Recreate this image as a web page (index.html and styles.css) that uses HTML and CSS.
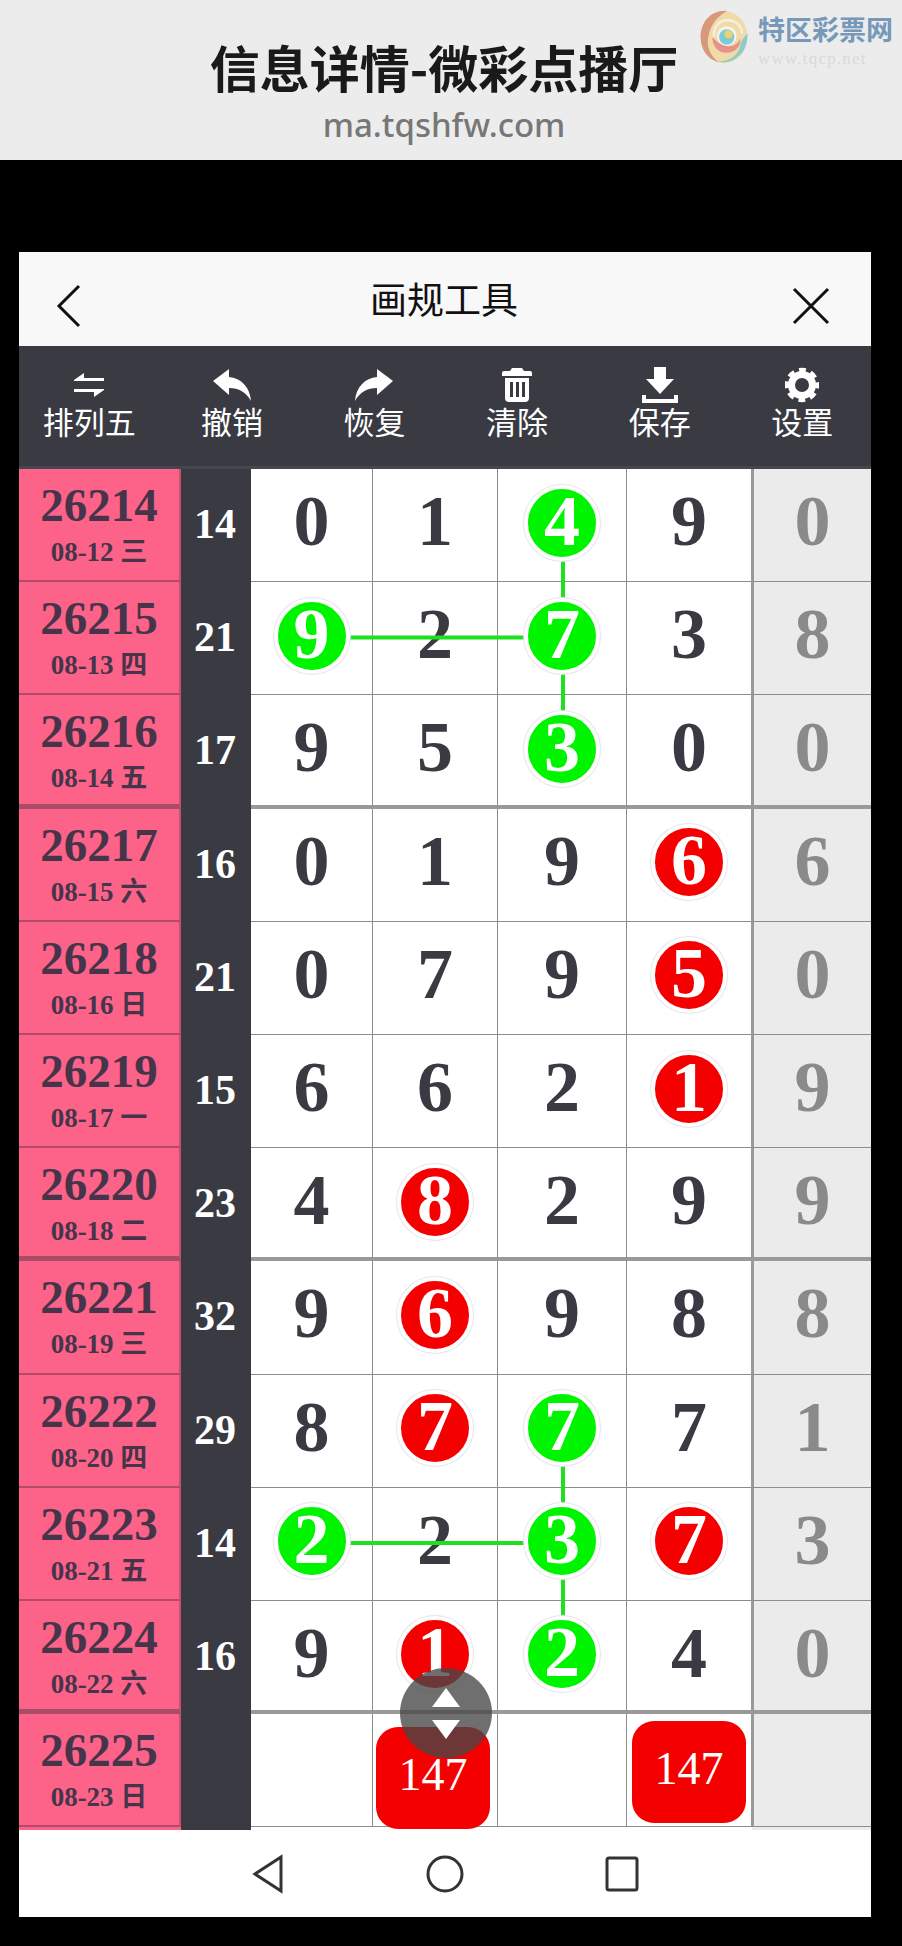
FILE: index.html
```html
<!DOCTYPE html>
<html lang="zh-CN">
<head>
    <meta charset="UTF-8">
    <meta name="viewport" content="width=device-width, initial-scale=1.0">
    <title>画规工具</title>
    <link rel="stylesheet" href="styles.css">
</head>
<body>
    <div class="banner">
        <div class="banner-title">信息详情-微彩点播厅</div>
        <div class="banner-url">ma.tqshfw.com</div>
        <div class="logo">
            <svg class="logo-mark" width="52" height="54" viewBox="0 0 54 60">
                <ellipse cx="27" cy="30" rx="26" ry="29" fill="#f1d9a0"/>
                <path d="M30 1C12 0 1 14 1 30c0 14 8 25 20 28C11 50 7 40 10 28 12 16 20 7 30 1z" fill="#d88f70"/>
                <path d="M53 26c1 16-9 31-26 32-3 0-5 0-7-1 13 1 23-7 25-17 1-6 4-10 8-14z" fill="#86c8c8"/>
                <path d="M14 30c0 12 9 20 20 17 8-2 12-8 11-15-3 6-8 9-15 8-7-1-11-5-16-10z" fill="#e58a80"/>
                <path d="M16 30C14 18 24 9 36 12c7 2 11 8 11 14" fill="none" stroke="#f6eedd" stroke-width="3"/>
                <circle cx="30" cy="29" r="11" fill="#f6f4ec"/>
                <circle cx="30" cy="30" r="8.5" fill="#72c8d8"/>
                <circle cx="32" cy="27" r="4.5" fill="#e7d25c"/>
            </svg>
            <div class="logo-text">
                <div class="logo-name">特区彩票网</div>
                <div class="logo-site">www.tqcp.net</div>
            </div>
        </div>
    </div>

    <div class="app">
        <div class="app-head">
            <svg class="head-icon" width="26" height="44" viewBox="0 0 26 44"><path d="M23 2 3 22l20 20"/></svg>
            <div class="app-title">画规工具</div>
            <svg class="head-icon" width="38" height="38" viewBox="0 0 38 38"><path d="M2 2l34 34M36 2 2 36"/></svg>
        </div>

        <div class="toolbar">
            <div class="tool">
                <svg width="32" height="26" viewBox="0 0 32 26"><path d="M1 8 11 1v5h20v3H1zM31 18 21 25v-5H1v-3h30z"/></svg>
                <span>排列五</span>
            </div>
            <div class="tool">
                <svg width="38" height="32" viewBox="0 0 38 32"><path d="M0 12 16 0v8c12 1 21 10 22 24-5-9-12-13-22-13v7z"/></svg>
                <span>撤销</span>
            </div>
            <div class="tool">
                <svg width="38" height="32" viewBox="0 0 38 32"><path d="M38 12 22 0v8C10 9 1 18 0 32c5-9 12-13 22-13v7z"/></svg>
                <span>恢复</span>
            </div>
            <div class="tool">
                <svg width="30" height="34" viewBox="0 0 30 34"><path fill-rule="evenodd" d="M10 0h10l2 3h6a2 2 0 0 1 2 2v3H0V5a2 2 0 0 1 2-2h6zM3 10h24v20a4 4 0 0 1-4 4H7a4 4 0 0 1-4-4zm5 4v15h3V14zm6 0v15h3V14zm6 0v15h3V14z"/></svg>
                <span>清除</span>
            </div>
            <div class="tool">
                <svg width="36" height="36" viewBox="0 0 36 36"><path d="M12 0h12v12h8L18 27 4 12h8zM0 28h4v4h28v-4h4v8H0z"/></svg>
                <span>保存</span>
            </div>
            <div class="tool">
                <svg class="gear" width="34" height="34" viewBox="0 0 34 34">
                    <circle cx="17" cy="17" r="10.5" stroke-width="7"/>
                    <circle cx="17" cy="17" r="14.5" stroke-width="5.5" stroke-dasharray="6.5 4.89" stroke-dashoffset="3.25"/>
                </svg>
                <span>设置</span>
            </div>
        </div>

        <div class="table">
            <svg class="links" width="852" height="1364" viewBox="0 0 852 1364">
                <path d="M291 171.5H544M544 58V284M291 1077H544M544 964V1190"/>
            </svg>

            <div class="row">
                <div class="qi"><b>26214</b><small>08-12 三</small></div><div class="he">14</div>
                <div class="n">0</div><div class="n">1</div><div class="n"><i class="ball g">4</i></div><div class="n">9</div><div class="n last">0</div>
            </div>
            <div class="row">
                <div class="qi"><b>26215</b><small>08-13 四</small></div><div class="he">21</div>
                <div class="n"><i class="ball g">9</i></div><div class="n">2</div><div class="n"><i class="ball g">7</i></div><div class="n">3</div><div class="n last">8</div>
            </div>
            <div class="row thick">
                <div class="qi"><b>26216</b><small>08-14 五</small></div><div class="he">17</div>
                <div class="n">9</div><div class="n">5</div><div class="n"><i class="ball g">3</i></div><div class="n">0</div><div class="n last">0</div>
            </div>
            <div class="row">
                <div class="qi"><b>26217</b><small>08-15 六</small></div><div class="he">16</div>
                <div class="n">0</div><div class="n">1</div><div class="n">9</div><div class="n"><i class="ball r">6</i></div><div class="n last">6</div>
            </div>
            <div class="row">
                <div class="qi"><b>26218</b><small>08-16 日</small></div><div class="he">21</div>
                <div class="n">0</div><div class="n">7</div><div class="n">9</div><div class="n"><i class="ball r">5</i></div><div class="n last">0</div>
            </div>
            <div class="row">
                <div class="qi"><b>26219</b><small>08-17 一</small></div><div class="he">15</div>
                <div class="n">6</div><div class="n">6</div><div class="n">2</div><div class="n"><i class="ball r">1</i></div><div class="n last">9</div>
            </div>
            <div class="row thick">
                <div class="qi"><b>26220</b><small>08-18 二</small></div><div class="he">23</div>
                <div class="n">4</div><div class="n"><i class="ball r">8</i></div><div class="n">2</div><div class="n">9</div><div class="n last">9</div>
            </div>
            <div class="row">
                <div class="qi"><b>26221</b><small>08-19 三</small></div><div class="he">32</div>
                <div class="n">9</div><div class="n"><i class="ball r">6</i></div><div class="n">9</div><div class="n">8</div><div class="n last">8</div>
            </div>
            <div class="row">
                <div class="qi"><b>26222</b><small>08-20 四</small></div><div class="he">29</div>
                <div class="n">8</div><div class="n"><i class="ball r">7</i></div><div class="n"><i class="ball g">7</i></div><div class="n">7</div><div class="n last">1</div>
            </div>
            <div class="row">
                <div class="qi"><b>26223</b><small>08-21 五</small></div><div class="he">14</div>
                <div class="n"><i class="ball g">2</i></div><div class="n">2</div><div class="n"><i class="ball g">3</i></div><div class="n"><i class="ball r">7</i></div><div class="n last">3</div>
            </div>
            <div class="row thick">
                <div class="qi"><b>26224</b><small>08-22 六</small></div><div class="he">16</div>
                <div class="n">9</div><div class="n"><i class="ball r">1</i></div><div class="n"><i class="ball g">2</i></div><div class="n">4</div><div class="n last">0</div>
            </div>
            <div class="row">
                <div class="qi"><b>26225</b><small>08-23 日</small></div><div class="he"></div>
                <div class="n"></div><div class="n"><span class="pick pick-low">147</span></div><div class="n"></div><div class="n"><span class="pick">147</span></div><div class="n last"></div>
            </div>

            <div class="scroll-btn"><i class="tri-up"></i><i class="tri-down"></i></div>
        </div>

        <div class="nav">
            <svg width="34" height="40" viewBox="0 0 34 40"><path d="M30 3 4 20l26 17z"/></svg>
            <svg width="38" height="38" viewBox="0 0 38 38"><circle cx="19" cy="19" r="17"/></svg>
            <svg width="34" height="36" viewBox="0 0 34 36"><rect x="2" y="2" width="30" height="32" rx="2"/></svg>
        </div>
    </div>
</body>
</html>
```

FILE: styles.css
```css
html, body {
    margin: 0;
    padding: 0;
}

body {
    width: 902px;
    height: 1946px;
    overflow: hidden;
    background-color: #000;
    font-family: "Noto Sans CJK SC", "Noto Sans", sans-serif;
}

.banner {
    position: relative;
    height: 160px;
    padding-right: 14px;
    box-sizing: border-box;
    background-color: #ececec;
    display: flex;
    flex-direction: column;
    align-items: center;
}

.banner-title {
    margin-top: 30px;
    font-size: 50px;
    line-height: 72px;
    font-weight: 700;
    color: #1a1a1a;
}

.banner-url {
    font-family: "Noto Sans", sans-serif;
    font-size: 33px;
    line-height: 46px;
    font-weight: 500;
    color: #777;
}

.logo {
    position: absolute;
    top: 10px;
    right: 9px;
    display: flex;
    align-items: flex-start;
    gap: 8px;
    opacity: 0.9;
}

.logo-text {
    margin-top: 6px;
}

.logo-name {
    font-size: 27px;
    line-height: 26px;
    font-weight: 700;
    color: #6a8fb4;
}

.logo-site {
    margin-top: 7px;
    font-family: "Liberation Serif", serif;
    font-size: 17px;
    line-height: 20px;
    letter-spacing: 1.2px;
    color: #d8d8d8;
}

.app {
    width: 852px;
    margin: 92px 0 0 19px;
}

.app-head {
    height: 94px;
    padding: 14px 41px 0 37px;
    box-sizing: border-box;
    display: flex;
    align-items: center;
    justify-content: space-between;
    background-color: #f8f8f8;
}

.head-icon {
    fill: none;
    stroke: #111;
    stroke-width: 3;
}

.app-title {
    font-size: 37px;
    color: #111;
    margin: -16px 0 0 14px;
}

.toolbar {
    height: 120px;
    display: flex;
    overflow: hidden;
    background-color: #3a3a42;
}

.tool {
    flex: 0 0 142.6px;
    display: flex;
    flex-direction: column;
    align-items: center;
    color: #fff;
    font-size: 31px;
}

.tool:first-child {
    margin-left: -1px;
}

.tool svg {
    height: 36px;
    margin-top: 21px;
    fill: #fff;
}

.tool .gear {
    fill: none;
    stroke: #fff;
}

.tool span {
    line-height: 38px;
    margin-top: -1px;
}

.table {
    position: relative;
    height: 1364px;
    border-top: 3px solid #46464e;
    box-sizing: border-box;
    display: flex;
    flex-direction: column;
    background: linear-gradient(90deg, #fd6388 162px, #3a3a42 162px 232px, #fff 232px 733px, #ebebeb 733px);
}

.links {
    position: absolute;
    top: -3px;
    left: 0;
    z-index: 1;
    fill: none;
    stroke: #1ee01e;
    stroke-width: 4;
}

.row {
    height: 113.2px;
    flex: none;
    box-sizing: border-box;
    display: grid;
    grid-template-columns: 162px 70px 122px 125px 129px 125px 119px;
    grid-template-rows: minmax(0, 1fr);
    font-family: "Liberation Serif", "Noto Sans CJK SC", serif;
    font-weight: 700;
}

.qi {
    background-color: #fd6388;
    border-bottom: 2px solid #b24a68;
    border-right: 2px solid #c9506f;
    box-sizing: border-box;
    color: #46354a;
    text-align: center;
}

.qi b {
    display: block;
    font-size: 47px;
    line-height: 50px;
    margin-top: 11px;
}

.qi small {
    display: block;
    margin-top: 6px;
    font-size: 27px;
    line-height: 32px;
    font-weight: 700;
}

.he {
    padding: 0 2px 3px 0;
    box-sizing: border-box;
    background-color: #3a3a42;
    color: #fff;
    font-size: 42px;
    display: flex;
    align-items: center;
    justify-content: center;
}

.n {
    display: flex;
    align-items: center;
    justify-content: center;
    padding-bottom: 8px;
    box-sizing: border-box;
    background-color: #fff;
    border-bottom: 1px solid #8c8c8c;
    border-right: 1px solid #8c8c8c;
    color: #3a3a42;
    font-size: 72px;
    line-height: 1;
}

.last {
    background-color: #ebebeb;
    border-right: none;
    border-left: 3px solid #999;
    margin-left: -1px;
    color: #8a8a8a;
}

.thick .qi {
    border-bottom: 5px solid #a84c68;
}

.thick .n {
    padding-bottom: 5px;
    border-bottom: 4px solid #999;
}

.ball {
    position: relative;
    z-index: 2;
    box-sizing: border-box;
    width: 76px;
    height: 76px;
    margin-top: 3px;
    padding-bottom: 4px;
    border: 4px solid #fff;
    border-radius: 50%;
    box-shadow: 0 0 1px 1px #e4e4e8;
    display: flex;
    align-items: center;
    justify-content: center;
    font-style: normal;
    color: #fff;
}

.ball.g {
    background-color: #00f400;
}

.ball.r {
    background-color: #f40000;
}

.pick {
    position: relative;
    box-sizing: border-box;
    width: 114px;
    height: 102px;
    margin-top: 12px;
    padding-bottom: 6px;
    border-radius: 22px;
    background-color: #f40000;
    color: #fff;
    font-size: 46px;
    font-weight: 400;
    display: flex;
    align-items: center;
    justify-content: center;
}

.pick-low {
    margin-top: 24px;
    margin-left: -4px;
}

.scroll-btn {
    position: absolute;
    left: 381px;
    top: 1199px;
    z-index: 3;
    width: 92px;
    height: 90px;
    border-radius: 50%;
    background-color: rgba(70, 70, 70, 0.78);
    display: flex;
    flex-direction: column;
    align-items: center;
    justify-content: center;
    gap: 13px;
}

.tri-up, .tri-down {
    width: 0;
    height: 0;
    border-left: 14px solid transparent;
    border-right: 14px solid transparent;
}

.tri-up {
    border-bottom: 19px solid #fff;
}

.tri-down {
    border-top: 19px solid #fff;
}

.nav {
    height: 87px;
    display: flex;
    align-items: center;
    justify-content: center;
    gap: 141px;
    background-color: #fff;
}

.nav svg {
    fill: none;
    stroke: #333;
    stroke-width: 3;
}
```
